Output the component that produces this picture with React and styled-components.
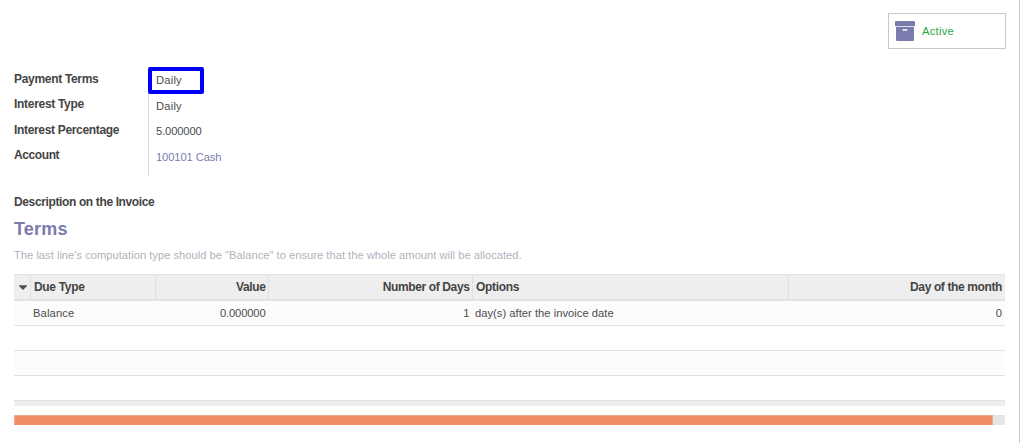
import React from "react";
import styled, { createGlobalStyle } from "styled-components";

const GlobalStyle = createGlobalStyle`
  *, *::before, *::after { box-sizing: border-box; }
  html, body { margin: 0; padding: 0; background: #fff; overflow: hidden; }
`;

const Sheet = styled.main`
  display: flex;
  flex-direction: column;
  width: 1020px;
  height: 443px;
  padding: 13px 14px 0 14px;
  border-right: 1px solid #c8c8d3;
  background: #fff;
  color: #4c4c4c;
  font: 11.2px/16px "Liberation Sans", Arial, sans-serif;
  white-space: nowrap;
`;

const Text = styled.span`
  letter-spacing: ${(p) => p.$track || 0}px;
`;

const ButtonBox = styled.div`
  display: flex;
  justify-content: flex-end;
  margin-right: -1px;
`;

const StatButton = styled.button`
  display: flex;
  align-items: center;
  gap: 6px;
  width: 118px;
  height: 36px;
  padding: 0 5px;
  border: 1px solid #c9c9cb;
  background: #fff;
  color: #28a745;
  font: inherit;
`;

const Group = styled.section`
  display: grid;
  grid-template-columns: 134px 1fr;
  height: 109px;
  margin-top: 18px;
`;

const Labels = styled.div`
  display: flex;
  flex-direction: column;
  padding-top: 4px;
`;

const Label = styled.label`
  height: ${(p) => p.$height || 25}px;
  font-size: 12px;
  font-weight: bold;
  color: #444;
`;

const Values = styled.div`
  display: flex;
  flex-direction: column;
  border-left: 1px solid #dadadd;
`;

const Highlight = styled.div`
  width: 56px;
  height: 27px;
  margin-left: -1px;
  padding: 1px 4px;
  border: 4px solid #0000fa;
  border-radius: 2px;
  line-height: 17px;
`;

const Value = styled.div`
  height: ${(p) => p.$height || 25}px;
  padding-left: 7px;
  line-height: 24px;
  color: ${(p) => (p.$link ? "#7c7bad" : "inherit")};
`;

const Caption = styled.h3`
  margin: 18px 0 0;
  font-size: 12px;
  line-height: 16px;
  color: #444;
`;

const Title = styled.h2`
  margin: 8px 0 0;
  font-size: 18px;
  line-height: 22px;
  color: #7c7bad;
`;

const Hint = styled.p`
  margin: 7px 0 0;
  color: #adb5bd;
`;

const Table = styled.div`
  display: flex;
  flex-direction: column;
  width: 991px;
  margin-top: 11px;
`;

const Row = styled.div`
  display: grid;
  grid-template-columns: 17px 125px 113px 204px 316px 216px;
  height: 25px;
  border-bottom: 1px solid #dee2e6;
  background: ${(p) => (p.$striped ? "#fcfcfc" : "#fff")};
`;

const HeadRow = styled(Row)`
  height: 27px;
  border-top: 1px solid #e3e4e6;
  border-bottom: 2px solid #dfe3e8;
  background: #eee;
  color: #444;
  font-size: 12px;
  font-weight: bold;
`;

const Cell = styled.div`
  display: flex;
  align-items: center;
  justify-content: ${(p) => (p.$end ? "flex-end" : "flex-start")};
  padding: 0 3.5px 0 2px;
  &:last-child { padding-right: 3px; }
`;

const HeadCell = styled(Cell)`
  padding: 0 2.5px 0 3px;
  border-right: 1px solid #dfe2e5;
  &:last-child { padding-right: 3px; border-right: 0; }
`;

const CaretCell = styled(HeadCell)`
  padding: 0 0 0 1px;
  justify-content: center;
`;

const Footer = styled.div`
  height: 5px;
  background: #eee;
`;

const ScrollTrack = styled.div`
  width: 991px;
  height: 10px;
  margin-top: 9px;
  border-top: 1px solid #e4e4e4;
  background: #e6e6e6;
`;

const ScrollThumb = styled.div`
  width: 979px;
  height: 10px;
  margin-top: -1px;
  border: solid #f2a98c;
  border-width: 1px 1px 0;
  background: #f08d67;
`;

const ArchiveIcon = () => (
  <svg width="22" height="20" viewBox="0 0 22 20" aria-hidden="true">
    <path d="M1 1Q1 0 2 0H20Q21 0 21 1V5H1ZM2 5.7H20V19Q20 20 19 20H3Q2 20 2 19ZM8.6 8.2V9.8H13.4V8.2Z" fill="#7c7bad" fillRule="evenodd" />
  </svg>
);

const Caret = () => (
  <svg width="8" height="5" viewBox="0 0 8 5" aria-hidden="true">
    <path d="M0 0.3H8V1L4 5L0 1Z" fill="#4c4c4c" />
  </svg>
);

export default function App() {
  return (
    <>
      <GlobalStyle />
      <Sheet>
        <ButtonBox>
          <StatButton>
            <ArchiveIcon />
            <Text $track={0.25}>Active</Text>
          </StatButton>
        </ButtonBox>
        <Group>
          <Labels>
            <Label><Text $track={-0.31}>Payment Terms</Text></Label>
            <Label $height={26}><Text $track={-0.3}>Interest Type</Text></Label>
            <Label><Text $track={-0.33}>Interest Percentage</Text></Label>
            <Label><Text $track={-0.4}>Account</Text></Label>
          </Labels>
          <Values>
            <Highlight><Text $track={0.2}>Daily</Text></Highlight>
            <Value><Text $track={0.2}>Daily</Text></Value>
            <Value $height={26}><Text $track={-0.13}>5.000000</Text></Value>
            <Value $link><Text $track={-0.1}>100101 Cash</Text></Value>
          </Values>
        </Group>
        <Caption><Text $track={-0.37}>Description on the Invoice</Text></Caption>
        <Title><Text $track={0.2}>Terms</Text></Title>
        <Hint>
          <Text>The last line's computation type should be "Balance" to ensure that the whole amount will be allocated.</Text>
        </Hint>
        <Table>
          <HeadRow>
            <CaretCell><Caret /></CaretCell>
            <HeadCell><Text $track={-0.33}>Due Type</Text></HeadCell>
            <HeadCell $end><Text $track={-0.35}>Value</Text></HeadCell>
            <HeadCell $end><Text $track={-0.37}>Number of Days</Text></HeadCell>
            <HeadCell><Text $track={-0.3}>Options</Text></HeadCell>
            <HeadCell $end><Text $track={-0.38}>Day of the month</Text></HeadCell>
          </HeadRow>
          <Row $striped>
            <Cell />
            <Cell><Text $track={0.14}>Balance</Text></Cell>
            <Cell $end><Text $track={-0.13}>0.000000</Text></Cell>
            <Cell $end><Text>1</Text></Cell>
            <Cell><Text $track={0.02}>day(s) after the invoice date</Text></Cell>
            <Cell $end><Text>0</Text></Cell>
          </Row>
          <Row />
          <Row $striped />
          <Row />
          <Footer />
        </Table>
        <ScrollTrack><ScrollThumb /></ScrollTrack>
      </Sheet>
    </>
  );
}
